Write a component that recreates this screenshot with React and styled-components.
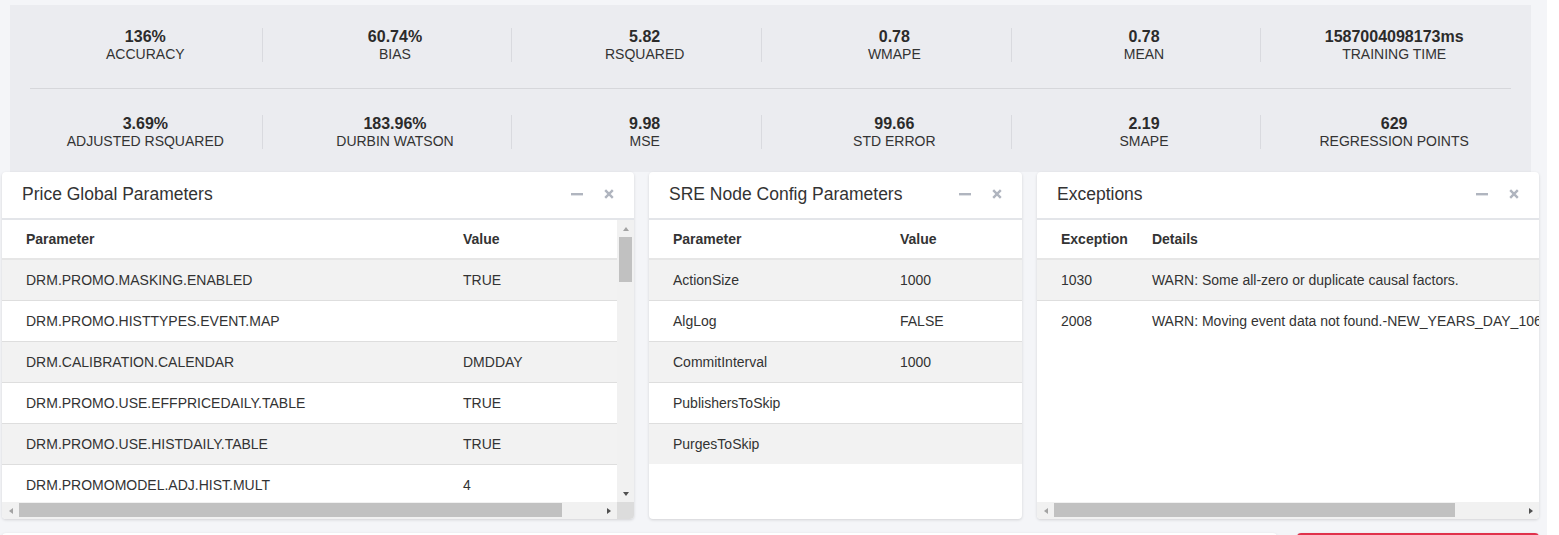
import React from "react";
import styled, { createGlobalStyle, css } from "styled-components";

const GlobalStyle = createGlobalStyle`
    * { box-sizing: border-box; }
    html, body {
        margin: 0;
        padding: 0;
        background: #ffffff;
        overflow: hidden;
        font-family: "Liberation Sans", Arial, sans-serif;
        color: #333333;
    }
`;

const topStats = [
    ["136%", "Accuracy"],
    ["60.74%", "Bias"],
    ["5.82", "RSquared"],
    ["0.78", "WMAPE"],
    ["0.78", "Mean"],
    ["1587004098173ms", "Training Time"],
];

const bottomStats = [
    ["3.69%", "Adjusted RSquared"],
    ["183.96%", "Durbin Watson"],
    ["9.98", "MSE"],
    ["99.66", "Std Error"],
    ["2.19", "SMAPE"],
    ["629", "Regression Points"],
];

const globalParams = [
    ["DRM.PROMO.MASKING.ENABLED", "TRUE"],
    ["DRM.PROMO.HISTTYPES.EVENT.MAP", ""],
    ["DRM.CALIBRATION.CALENDAR", "DMDDAY"],
    ["DRM.PROMO.USE.EFFPRICEDAILY.TABLE", "TRUE"],
    ["DRM.PROMO.USE.HISTDAILY.TABLE", "TRUE"],
    ["DRM.PROMOMODEL.ADJ.HIST.MULT", "4"],
];

const nodeParams = [
    ["ActionSize", "1000"],
    ["AlgLog", "FALSE"],
    ["CommitInterval", "1000"],
    ["PublishersToSkip", ""],
    ["PurgesToSkip", ""],
];

const exceptions = [
    ["1030", "WARN: Some all-zero or duplicate causal factors."],
    ["2008", "WARN: Moving event data not found.-NEW_YEARS_DAY_1065_2020"],
];

function StatRow({ items }) {
    return (
        <StatGrid>
            {items.map(([value, label], i) => (
                <StatCell key={label}>
                    <StatInner $last={i === items.length - 1}>
                        <StatValue>{value}</StatValue>
                        <StatLabel>{label}</StatLabel>
                    </StatInner>
                </StatCell>
            ))}
        </StatGrid>
    );
}

function PanelControls() {
    return (
        <Controls>
            <svg width="12" height="12" viewBox="0 0 12 12">
                <rect x="0" y="5" width="12" height="2.4" fill="#b0b5bf" />
            </svg>
            <svg width="10" height="10" viewBox="0 0 10 10">
                <path d="M1.2 1.2 L8.8 8.8 M8.8 1.2 L1.2 8.8" stroke="#b0b5bf" strokeWidth="2.4" />
            </svg>
        </Controls>
    );
}

// scrollbars are drawn as parts of the panel body: vThumb / hThumb give thumb sizes
function ScrollArea({ vThumb, hThumb, children }) {
    const v = vThumb !== undefined;
    const h = hThumb !== undefined;
    return (
        <ScrollFrame $v={v} $h={h}>
            <Viewport>{children}</Viewport>
            {v && (
                <VBar>
                    <BarButton><Arrow $dir="up" /></BarButton>
                    <VTrack>
                        <VThumb $size={vThumb} />
                    </VTrack>
                    <BarButton><Arrow $dir="down" /></BarButton>
                </VBar>
            )}
            {h && (
                <HBar>
                    <BarButton><Arrow $dir="left" /></BarButton>
                    <HTrack>
                        <HThumb $size={hThumb} />
                    </HTrack>
                    <BarButton><Arrow $dir="right" /></BarButton>
                </HBar>
            )}
            {v && h && <Corner />}
        </ScrollFrame>
    );
}

function Panel({ title, width, children }) {
    return (
        <Card $width={width}>
            <CardHeader>
                <CardTitle>{title}</CardTitle>
                <PanelControls />
            </CardHeader>
            {children}
        </Card>
    );
}

function DataTable({ columns, rows, width, fixed }) {
    return (
        <Table $width={width} $fixed={fixed}>
            <colgroup>
                {columns.map(([name, w]) => (
                    <col key={name} style={w ? { width: w } : undefined} />
                ))}
            </colgroup>
            <thead>
                <tr>
                    {columns.map(([name]) => (
                        <Th key={name}>{name}</Th>
                    ))}
                </tr>
            </thead>
            <tbody>
                {rows.map((row, i) => (
                    <Tr key={i} $odd={i % 2 === 0}>
                        {row.map((cell, j) => (
                            <Td key={j} $divider={i > 0}>{cell}</Td>
                        ))}
                    </Tr>
                ))}
            </tbody>
        </Table>
    );
}

export default function App() {
    return (
        <>
            <GlobalStyle />
            <Page>
                <StatsPanel>
                    <StatRow items={topStats} />
                    <StatDivider />
                    <StatRow items={bottomStats} />
                </StatsPanel>

                <CardsRow>
                    <Panel title="Price Global Parameters" width={632}>
                        <ScrollArea vThumb={45} hThumb={543}>
                            <DataTable
                                columns={[["Parameter", 437], ["Value", 221]]}
                                rows={globalParams}
                                width="658px"
                                fixed
                            />
                        </ScrollArea>
                    </Panel>
                    <Panel title="SRE Node Config Parameters" width={373}>
                        <ScrollArea>
                            <DataTable
                                columns={[["Parameter", 227], ["Value"]]}
                                rows={nodeParams}
                                width="100%"
                                fixed
                            />
                        </ScrollArea>
                    </Panel>
                    <Panel title="Exceptions" width={502}>
                        <ScrollArea hThumb={401}>
                            <DataTable
                                columns={[["Exception"], ["Details"]]}
                                rows={exceptions}
                                width="auto"
                            />
                        </ScrollArea>
                    </Panel>
                </CardsRow>

                <BottomRow>
                    <BottomCard $width={1275} />
                    <BottomCard $width={242} $accent />
                </BottomRow>
            </Page>
        </>
    );
}

const Page = styled.div`
    width: 1547px;
    height: 535px;
    overflow: hidden;
    background: #f4f5f8;
    padding: 5px 8px 0 2px;
`;

const StatsPanel = styled.section`
    margin: 0 8px;
    height: 167px;
    background: #ebecf0;
    padding: 23px 12px 0 11px;
`;

const StatGrid = styled.div`
    display: grid;
    grid-template-columns: repeat(6, 1fr);
`;

const StatCell = styled.div`
    padding: 0 8px;
`;

const StatInner = styled.div`
    display: flex;
    flex-direction: column;
    align-items: center;
    height: 34px;
    border-right: ${(p) => (p.$last ? "none" : "1px solid #d9dadf")};
`;

const StatValue = styled.div`
    font-size: 16px;
    line-height: 18px;
    font-weight: bold;
    color: #2b2b2b;
`;

const StatLabel = styled.div`
    font-size: 14px;
    line-height: 16px;
    text-transform: uppercase;
    color: #333333;
`;

const StatDivider = styled.hr`
    border: none;
    border-top: 1px solid #d6d7db;
    margin: 26px 8px 26px 9px;
`;

const CardsRow = styled.div`
    display: flex;
    gap: 15px;
`;

const Card = styled.div`
    width: ${(p) => p.$width}px;
    height: 347px;
    background: #ffffff;
    border-radius: 4px;
    box-shadow: 0 1px 3px rgba(0, 0, 0, 0.14);
    display: flex;
    flex-direction: column;
    overflow: hidden;
`;

const CardHeader = styled.header`
    display: flex;
    align-items: center;
    justify-content: space-between;
    height: 48px;
    flex-shrink: 0;
    padding: 0 20px 2px 20px;
    border-bottom: 2px solid #e3e5e9;
`;

const CardTitle = styled.h3`
    margin: 0;
    font-size: 17.5px;
    font-weight: normal;
    color: #333333;
`;

const Controls = styled.div`
    display: flex;
    align-items: center;
    gap: 21px;
`;

const ScrollFrame = styled.div`
    flex: 1;
    min-height: 0;
    display: grid;
    grid-template-columns: ${(p) => (p.$v ? "1fr 17px" : "1fr")};
    grid-template-rows: ${(p) => (p.$h ? "1fr 17px" : "1fr")};
`;

const Viewport = styled.div`
    overflow: hidden;
    min-width: 0;
    min-height: 0;
`;

const VBar = styled.div`
    display: flex;
    flex-direction: column;
    background: #f1f1f1;
`;

const HBar = styled.div`
    display: flex;
    background: #f1f1f1;
`;

const BarButton = styled.div`
    width: 17px;
    height: 17px;
    flex-shrink: 0;
    display: flex;
    align-items: center;
    justify-content: center;
`;

const VTrack = styled.div`
    flex: 1;
    padding: 0 2px;
`;

const HTrack = styled.div`
    flex: 1;
    padding: 1px 0 2px;
`;

const VThumb = styled.div`
    height: ${(p) => p.$size}px;
    background: #c1c1c1;
`;

const HThumb = styled.div`
    width: ${(p) => p.$size}px;
    height: 100%;
    background: #c1c1c1;
`;

const Corner = styled.div`
    background: #dcdcdc;
`;

const arrowStyles = {
    up: css`
        border-left: 3.5px solid transparent;
        border-right: 3.5px solid transparent;
        border-bottom: 4px solid #a3a3a3;
    `,
    down: css`
        border-left: 3.5px solid transparent;
        border-right: 3.5px solid transparent;
        border-top: 4px solid #505050;
    `,
    left: css`
        border-top: 3.5px solid transparent;
        border-bottom: 3.5px solid transparent;
        border-right: 4px solid #a3a3a3;
    `,
    right: css`
        border-top: 3.5px solid transparent;
        border-bottom: 3.5px solid transparent;
        border-left: 4px solid #505050;
    `,
};

const Arrow = styled.span`
    width: 0;
    height: 0;
    ${(p) => arrowStyles[p.$dir]}
`;

const Table = styled.table`
    width: ${(p) => p.$width};
    min-width: 100%;
    table-layout: ${(p) => (p.$fixed ? "fixed" : "auto")};
    border-collapse: separate;
    border-spacing: 0;
    font-size: 14px;
    white-space: nowrap;
`;

const Th = styled.th`
    text-align: left;
    font-weight: bold;
    color: #333333;
    line-height: 20px;
    padding: 9px 0 9px 24px;
    border-bottom: 2px solid #e6e6e6;
    &:last-child {
        padding-right: 24px;
    }
`;

const Tr = styled.tr`
    background: ${(p) => (p.$odd ? "#f2f2f2" : "#ffffff")};
`;

const Td = styled.td`
    line-height: 20px;
    padding: 10px 0 10px 24px;
    color: #333333;
    border-top: ${(p) => (p.$divider ? "1px solid #dedede" : "none")};
    &:last-child {
        padding-right: 24px;
    }
`;

const BottomRow = styled.div`
    display: flex;
    gap: 20px;
    margin-top: 14px;
`;

const BottomCard = styled.div`
    width: ${(p) => p.$width}px;
    height: 60px;
    background: #ffffff;
    border-radius: 4px;
    box-shadow: 0 1px 3px rgba(0, 0, 0, 0.14);
    border-top: ${(p) => (p.$accent ? "2px solid #e0314b" : "none")};
`;
